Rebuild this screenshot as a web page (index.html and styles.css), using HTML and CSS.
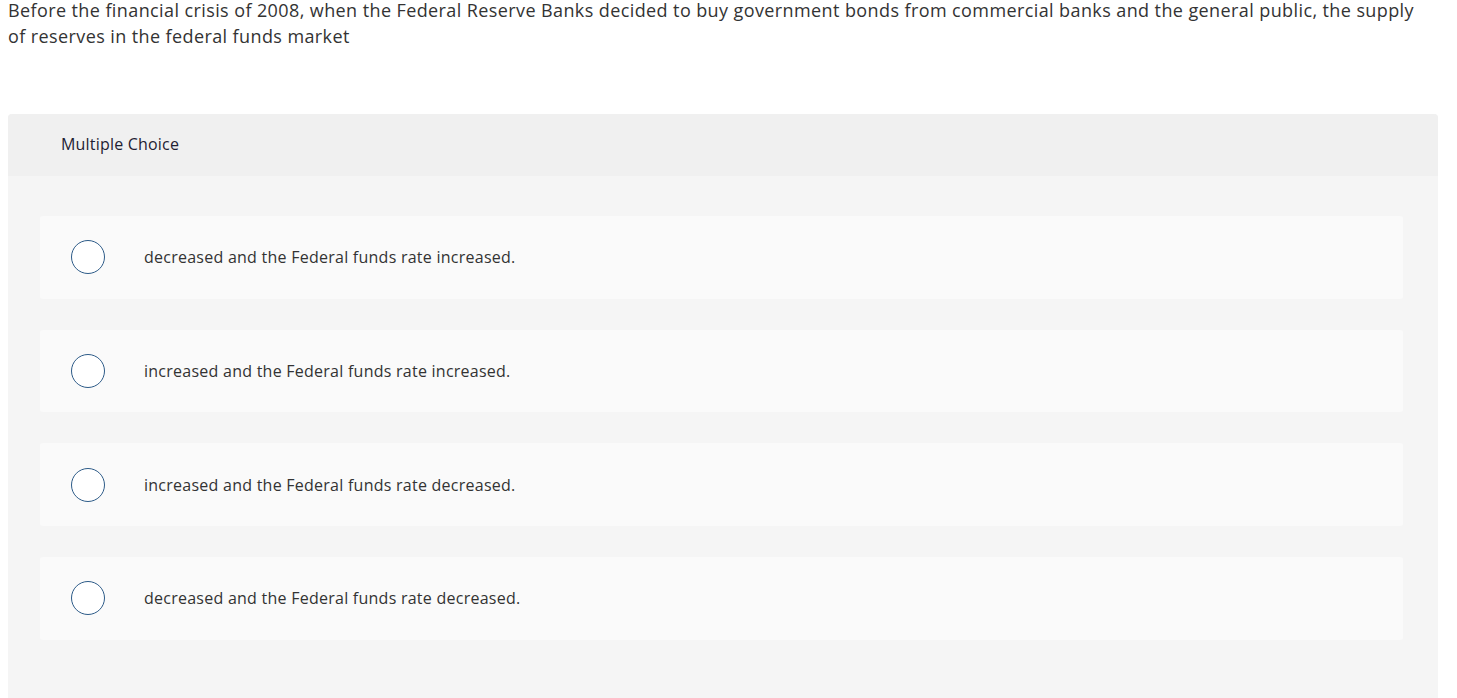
FILE: index.html
```html
<!DOCTYPE html>
<html lang="en">
<head>
<meta charset="utf-8">
<title>Multiple Choice</title>
<link rel="stylesheet" href="styles.css">
</head>
<body>
<main class="page">
  <p class="question">Before the financial crisis of 2008, when the Federal Reserve Banks decided to buy government bonds from commercial banks and the general public, the supply of reserves in the federal funds market</p>
  <section class="panel">
    <header class="panel-head">Multiple Choice</header>
    <div class="options">
      <label class="option"><span class="radio"></span><span class="opt-text">decreased and the Federal funds rate increased.</span></label>
      <label class="option"><span class="radio"></span><span class="opt-text">increased and the Federal funds rate increased.</span></label>
      <label class="option"><span class="radio"></span><span class="opt-text">increased and the Federal funds rate decreased.</span></label>
      <label class="option"><span class="radio"></span><span class="opt-text">decreased and the Federal funds rate decreased.</span></label>
    </div>
  </section>
</main>
</body>
</html>
```
FILE: styles.css
```css
html, body {
  margin: 0;
  padding: 0;
  background: #ffffff;
}
body {
  font-family: "Open Sans", "Liberation Sans", Arial, sans-serif;
  color: #333333;
  overflow: hidden;
}
.page {
  padding: 0 19px 0 8px;
  margin-top: -3px;
}
.question {
  margin: 0;
  font-size: 18px;
  line-height: 26px;
  letter-spacing: 0.4px;
  color: #333333;
  width: 1420px;
}
.panel {
  margin-top: 65px;
  width: 1430px;
  background: #f5f5f5;
  border-radius: 4px 4px 0 0;
  padding-bottom: 60px;
}
.panel-head {
  background: #f0f0f0;
  border-radius: 4px 4px 0 0;
  height: 62px;
  box-sizing: border-box;
  padding: 0 0 2px 53px;
  display: flex;
  align-items: center;
  font-size: 16px;
  letter-spacing: 0.2px;
  color: #1f2233;
}
.options {
  display: flex;
  flex-direction: column;
  gap: 31px;
  padding: 40px 35px 0 32px;
}
.option {
  display: flex;
  align-items: center;
  height: 82.67px;
  background: #fafafa;
  border-radius: 3px;
  padding-left: 31px;
}
.radio {
  width: 32px;
  height: 32px;
  border: 1.5px solid #2d5b88;
  border-radius: 50%;
  background: #ffffff;
  flex: none;
}
.opt-text {
  margin-left: 39px;
  font-size: 16px;
  letter-spacing: 0.25px;
  color: #333333;
}
```
